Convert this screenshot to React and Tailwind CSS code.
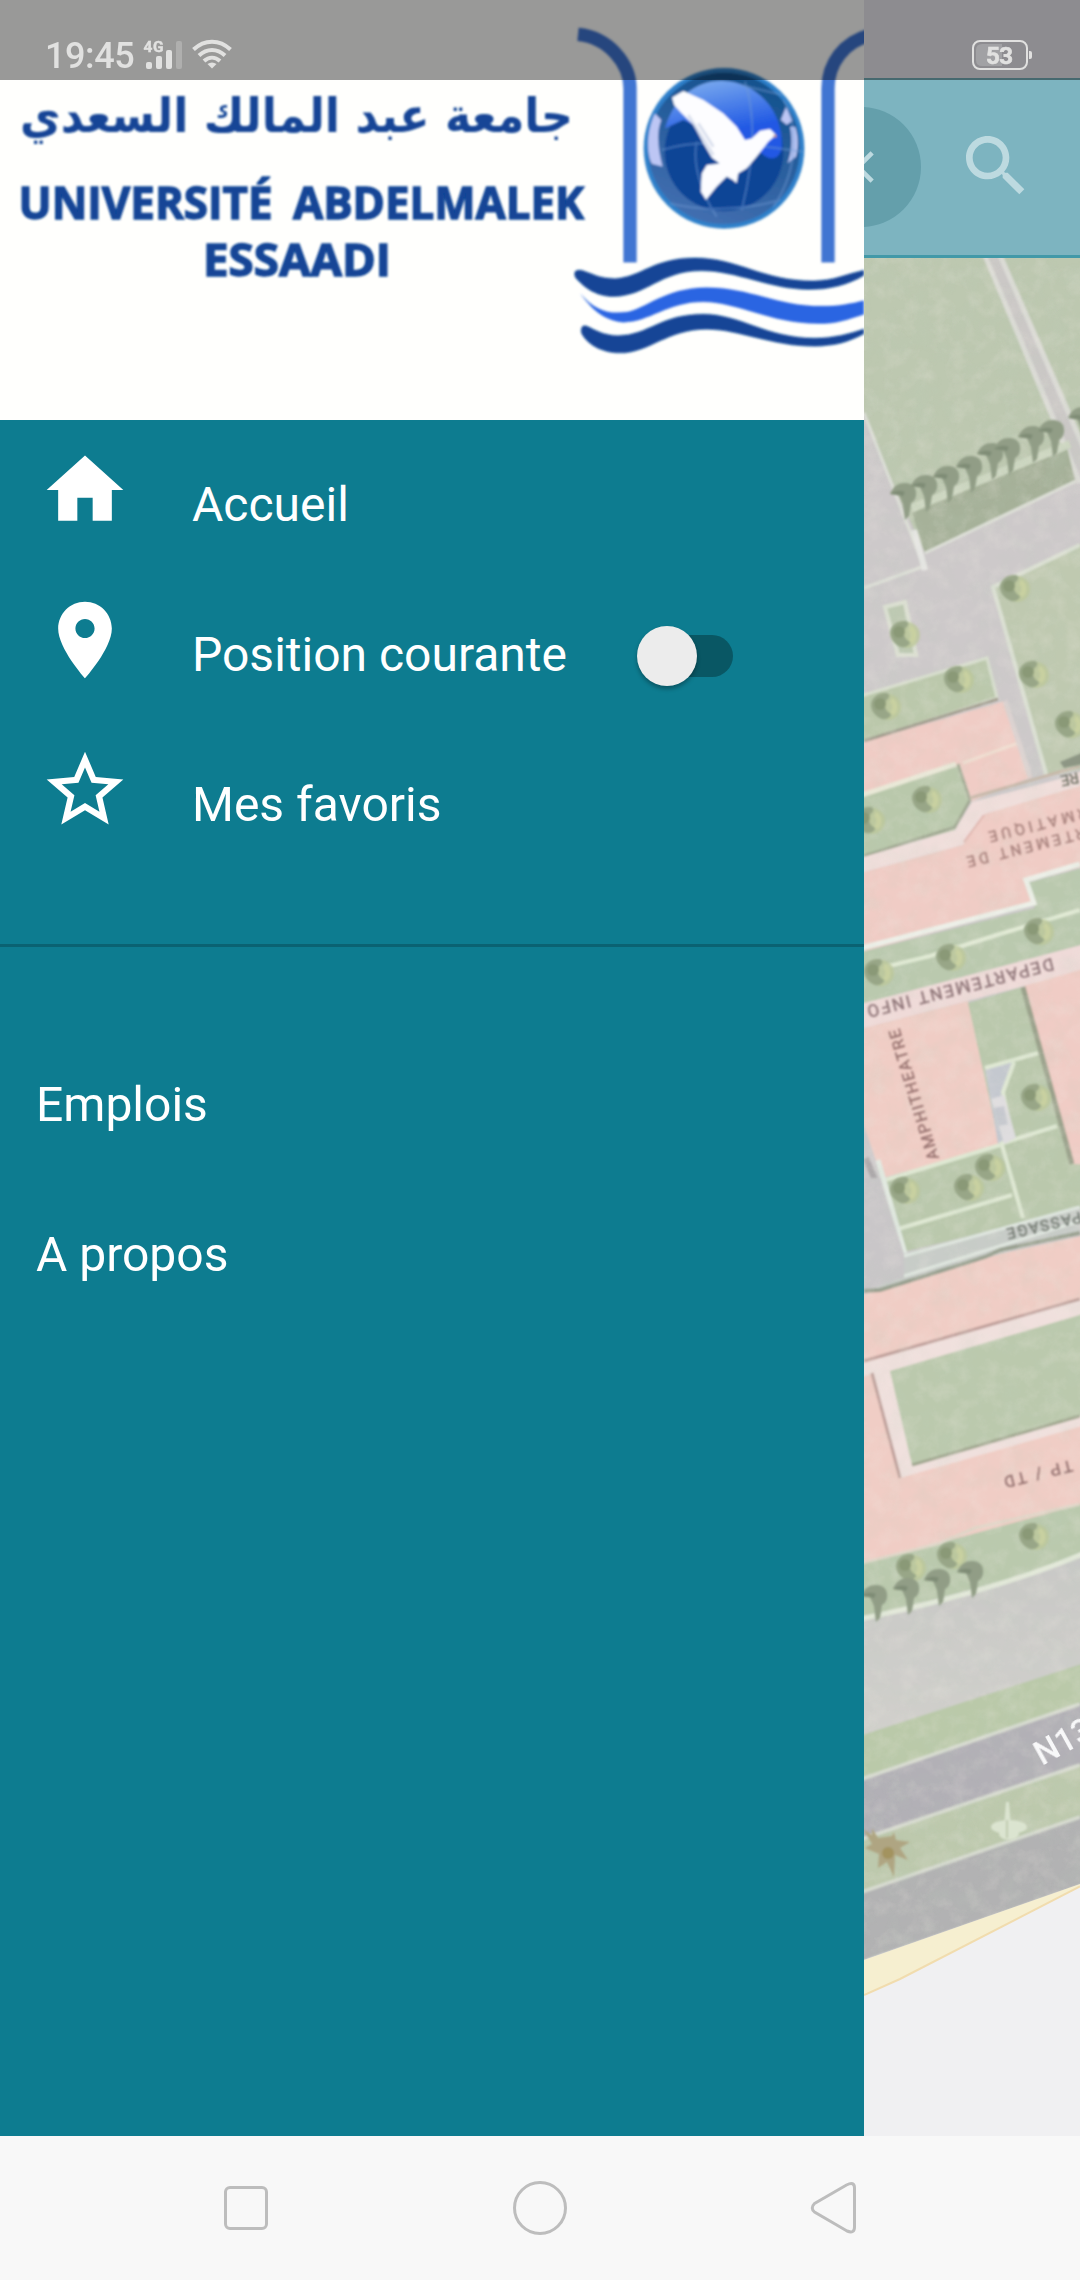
const TREES = [
  [1013, 588], [1032, 674], [1068, 724], [903, 634], [957, 679], [884, 706],
  [925, 799], [868, 820], [877, 972], [949, 957], [1037, 931], [1034, 1097],
  [903, 1190], [967, 1187], [988, 1167], [1032, 1536], [950, 1555], [909, 1567],
];

const PALMS = [
  [904, 498], [925, 490], [947, 481], [970, 471], [991, 458], [1008, 453],
  [1032, 441], [1052, 435], [1082, 422], [875, 1600], [907, 1593], [938, 1584], [971, 1576],
];

function Tree({ x, y }) {
  return (
    <g transform={`translate(${x} ${y})`}>
      <circle cx="4" cy="1" r="13" fill="#bcc79a" opacity=".8" />
      <path d="M3-13c-9-1-16 5-16 12 0 6 5 12 11 14 5 1 9-2 9-5-5-3-8-8-5-13 2-3 6-5 1-8z" fill="#98a687" />
      <circle cx="-4" cy="-2" r="6" fill="#8a9977" />
      <path d="M7-6c4 2 6 8 1 14" stroke="#c8d0a0" strokeWidth="5" fill="none" />
    </g>
  );
}

function Palm({ x, y }) {
  return (
    <g transform={`translate(${x} ${y})`} fill="#919d86">
      <path d="M-14-4c3-8 9-11 15-11 8 0 12 5 11 13-1 4-3 6-5 7L5 18 1 22-1 6-5-3z" />
      <path d="M-14-4c5-4 10-4 15-2l-2 4z" fill="#7f8c76" />
    </g>
  );
}

function CampusMap() {
  return (
    <svg className="block h-[1878px] w-[216px]" viewBox="864 258 216 1878">
      <defs>
        <filter id="grain" x="0" y="0" width="1" height="1">
          <feTurbulence type="fractalNoise" baseFrequency="0.045" numOctaves="4" seed="4" result="n" />
          <feColorMatrix in="n" type="matrix" values="0 0 0 0 .5  0 0 0 0 .62  0 0 0 0 .5  2 0 0 0 -.85" />
        </filter>
        <filter id="flecks" x="0" y="0" width="1" height="1">
          <feTurbulence type="fractalNoise" baseFrequency="0.06" numOctaves="4" seed="11" result="n" />
          <feColorMatrix in="n" type="matrix" values="0 0 0 0 .86  0 0 0 0 .82  0 0 0 0 .76  2 0 0 0 -.85" />
        </filter>
        <filter id="soft"><feGaussianBlur stdDeviation="1.3" /></filter>
        <clipPath id="ground"><path d="M864 258H1080V1885L864 1960z" /></clipPath>
        <linearGradient id="plaza" x1="0" y1="0" x2="0" y2="1">
          <stop offset="0" stopColor="#c8c8c6" />
          <stop offset="1" stopColor="#d1d0cc" />
        </linearGradient>
      </defs>
      <rect x="864" y="258" width="216" height="1878" fill="#f0f0f2" />
      <g filter="url(#soft)">
        <path d="M850 240H1100V1876L1080 1885 864 1960H850z" fill="#cdc9ca" />
        {/* lawns beside the upper path */}
        <path d="M850 240H977L985 258 1063 447 1075 480 925 553 895 488 864 413 850 380zM1000 240 1000 258 1080 437 1100 470V240z" fill="#bdc8b0" />
        <path d="M985 255 1080 483 M1000 255 1090 462" stroke="#dcdcd6" strokeWidth="5" />
        <path d="M992 255 1085 472" stroke="#cbc8c6" strokeWidth="9" />
        <path d="M912 513 1067 447 1075 480 925 553z" fill="#a6b199" />
        <path d="M912 508 1070 444" stroke="#cdd7c1" strokeWidth="8" />
        <path d="M864 413 925 570M925 553 1076 481M864 588 922 567" fill="none" stroke="#dddfd7" strokeWidth="3" />
        <path d="M914 530 925 570" stroke="#e6e6e3" strokeWidth="6" />
        <path d="M993 587 1100 535V765L1047 777z" fill="#bfc9b0" />
        <path d="M1080 545 993 587 1047 777" fill="none" stroke="#dbe0d3" strokeWidth="4" />
        <path d="M885 607 905 602 916 655 898 655z" fill="#bec9b2" stroke="#dce0d2" strokeWidth="4" />
        <path d="M850 700 864 695 987 658 997 698 864 742 850 746z" fill="#bbc8ab" stroke="#d9dfcf" strokeWidth="3" />
        {/* north building */}
        <path d="M850 746 1005 701 1032 777 970 802 958 766 850 800z" fill="#f0ccc5" />
        <path d="M864 741 998 699" stroke="#a39d8f" strokeWidth="3" />
        <path d="M963 763 1018 743" stroke="#f0ded1" strokeWidth="3" />
        <path d="M1005 701 1030 777" stroke="#dcd2d0" strokeWidth="5" />
        <path d="M850 800 958 766 969 802 955 830 850 860z" fill="#b9c8ab" />
        <path d="M850 799 956 764" stroke="#e9e8d7" strokeWidth="5" />
        <path d="M958 764 970 800 955 827 864 856" fill="none" stroke="#a3aa94" strokeWidth="3" />
        <path d="M850 861 955 830 972 802 1060 779 1100 765V782L985 814 963 845 850 876z" fill="#f0dedb" />
        <path d="M970 798 1080 766" stroke="#c7b7a9" strokeWidth="3" />
        {/* department building */}
        <path d="M850 876 963 845 985 814 1100 780V862L1025 882 1033 905 850 955z" fill="#f0ccc5" />
        <path d="M964 842 984 815" stroke="#dfb5ae" strokeWidth="2" />
        <path d="M850 955 1035 908 1027 883 1100 863V940L850 1007z" fill="#bac9ae" />
        <path d="M850 951 1034 903 1026 880 1080 864" fill="none" stroke="#edf0e8" strokeWidth="5" />
        <path d="M885 967 930 956 1000 934 1080 910" fill="none" stroke="#e1ead4" strokeWidth="4" />
        <path d="M850 1007 1100 940V966L850 1032z" fill="#efdad8" />
        {/* amphitheatre and courtyards */}
        <path d="M850 1032 968 1001 1000 1146 882 1178 850 1085z" fill="#f0cdc5" />
        <path d="M1024 986 1100 964V1170L1073 1164z" fill="#f0ccc5" />
        <path d="M968 1003 1022 987 1072 1164 1100 1165V1205L903 1252 885 1180 1000 1146z" fill="#bac8ac" />
        <path d="M1023 987 1072 1164" stroke="#9ba28c" strokeWidth="5" />
        <path d="M985 1068 1013 1060 1003 1092 1015 1137 998 1144z" fill="#c4c8cf" />
        <path d="M985 1068 1038 1053M1014 1062 1003 1092 1012 1140M1000 1144 1057 1126M1002 1145 1023 1218M885 1180 1000 1145M898 1229 1012 1195" fill="none" stroke="#dfe8d3" strokeWidth="4" />
        <path d="M991 1099 1004 1095 1016 1138 1004 1144z" fill="#dfdddf" />
        <path d="M994 1108 1004 1106 1008 1124 999 1126z" fill="#c6c8cf" />
        <path d="M878 1160 905 1254" stroke="#e2e9e1" strokeWidth="5" />
        <path d="M866 1158 875 1180" stroke="#aaa4a8" strokeWidth="6" />
        <path d="M903 1254 1080 1206V1232L864 1292" fill="#c8ccc8" />
        <path d="M904 1256 1080 1207M904 1276 1080 1221" stroke="#dfe6df" strokeWidth="3" />
        <path d="M850 1190 864 1178 880 1178 904 1254V1277L850 1296z" fill="#c9c6c8" />
        {/* south building around its garden */}
        <path d="M850 1298 880 1290 987 1258 1000 1254 1100 1232V1500L850 1567z" fill="#f0cdc5" />
        <path d="M864 1291 880 1290 985 1257 1000 1250 1080 1233" fill="none" stroke="#99a090" strokeWidth="4" />
        <path d="M850 1367 1100 1294V1421L900 1478 872 1374 850 1380z" fill="#f0e0dd" />
        <path d="M864 1361 1080 1299M872 1373 900 1478" stroke="#c0a09b" strokeWidth="3" />
        <path d="M890 1371 1100 1309V1410L912 1465z" fill="#bbc9ad" />
        <path d="M912 1465 1080 1416" stroke="#a2a891" strokeWidth="3" />
        <path d="M850 1567 940 1543 1100 1499V1555L850 1622z" fill="#bac9ad" />
        <path d="M850 1566 940 1543 975 1528 1080 1504" fill="none" stroke="#e0d6c8" strokeWidth="3" />
        <path d="M850 1622Q990 1594 1100 1548V1660L850 1740z" fill="url(#plaza)" />
        <path d="M850 1621Q990 1593 1085 1553" fill="none" stroke="#e2e8d9" strokeWidth="5" />
        <path d="M850 1739 1100 1658V1697L850 1783z" fill="#bac9a9" />
        <path d="M850 1783 1100 1697V1758L850 1844z" fill="#b2b0b6" />
        <path d="M850 1844 1100 1758V1810L850 1896z" fill="#bdc9ad" />
        <path d="M850 1896 1100 1810V1878L850 1965z" fill="#b2b2b3" />
        <path d="M850 1783 1080 1704M850 1843 1080 1765M850 1896 1080 1817" stroke="#d7dbd0" strokeWidth="3.5" />
      </g>
      <g clipPath="url(#ground)">
        <rect x="864" y="258" width="216" height="1702" filter="url(#grain)" opacity=".16" />
        <rect x="864" y="258" width="216" height="1702" filter="url(#flecks)" opacity=".22" />
      </g>
      <g filter="url(#soft)">
        {TREES.map(([x, y]) => <Tree key={`${x}-${y}`} x={x} y={y} />)}
        {PALMS.map(([x, y]) => <Palm key={`${x}-${y}`} x={x} y={y} />)}
        <path d="M1060 762 1084 752V764L1064 768z" fill="#8d9684" />
        <path d="M872 1828l6 10 14-2 2-4 2 8 14 2-10 6 8 12-13-5-1 22-7-15-9 6 1-14-14-6 7-4-9-15 9 6z" fill="#afa582" />
        <circle cx="888" cy="1853" r="6" fill="#a3935f" />
        <g fill="#dbe4d0">
          <path d="M1006 1802h3l2 24h-7z" />
          <ellipse cx="1009" cy="1827" rx="18" ry="7" />
          <ellipse cx="1009" cy="1834" rx="10" ry="6" />
        </g>
        <path d="M1007 1820v18" stroke="#b7c2a6" strokeWidth="1.5" />
        <g fill="#a9847f" stroke="#a9847f" strokeWidth=".4" fontFamily="Roboto, sans-serif" fontSize="15">
          <text transform="translate(988 832) rotate(166)" textAnchor="end" textLength="150">INFORMATIQUE</text>
          <text transform="translate(966 857) rotate(166)" textAnchor="end" textLength="172">DEPARTEMENT DE</text>
          <text transform="translate(1060 776) rotate(168)" textAnchor="end" fill="#76776b" stroke="#76776b">RE</text>
          <text transform="translate(1052 958) rotate(165.5)" fontSize="17" fill="#8f7679" stroke="#8f7679" textLength="192">DEPARTEMENT INFO</text>
          <text transform="translate(939 1158) rotate(-107)" fontSize="16" fill="#977370" stroke="#977370" textLength="136">AMPHITHEATRE</text>
          <text transform="translate(1006 1229) rotate(167)" textAnchor="end" fill="#747b73" stroke="#747b73" textLength="76">PASSAGE</text>
          <text transform="translate(1003 1477) rotate(166)" textAnchor="end" fontSize="16" fill="#93716f" stroke="#93716f" textLength="70">TP / TD</text>
        </g>
      </g>
      <path d="M864 1960 1080 1884V1887L900 1979 864 1995z" fill="#f6efd0" />
      <path d="M864 1995 900 1979 1080 1886.500" fill="none" stroke="#f1dcae" strokeWidth="2" />
      <text transform="translate(1042 1766) rotate(-29)" fill="#f8f8f9" fontFamily="Roboto, sans-serif" fontSize="33" fontWeight="500">N13</text>
    </svg>
  );
}

function UniversityBanner() {
  return (
    <svg className="block h-[420px] w-[864px] shrink-0 bg-[#fffffd]" viewBox="0 0 864 420">
      <defs>
        <filter id="smooth"><feGaussianBlur stdDeviation="1.2" /></filter>
        <linearGradient id="sky" x1="0" y1="0" x2="0.3" y2="1">
          <stop offset="0" stopColor="#85b4f0" />
          <stop offset="0.75" stopColor="#2159e4" />
        </linearGradient>
        <linearGradient id="rim" x1="0.7" y1="0" x2="0.3" y2="1">
          <stop offset="0" stopColor="#12508c" />
          <stop offset="1" stopColor="#4470b2" />
        </linearGradient>
        <clipPath id="globe"><circle cx="462" cy="415" r="236" /></clipPath>
      </defs>
      <g filter="url(#smooth)">
        <g fill="#124596">
          <text transform="translate(20 132) scale(1 1.08)" direction="ltr" textLength="553" lengthAdjust="spacingAndGlyphs" fontFamily="'DejaVu Sans', sans-serif" fontSize="44" fontWeight="700">جامعة عبد المالك السعدي</text>
          <g fontFamily="'Open Sans', sans-serif" fontSize="45" fontWeight="700" stroke="#124596" strokeWidth="1.4">
            <text x="18.500" y="218.500" textLength="254" lengthAdjust="spacingAndGlyphs">UNIVERSITÉ</text>
            <text x="293" y="218.500" textLength="291" lengthAdjust="spacingAndGlyphs">ABDELMALEK</text>
            <text x="203" y="275.500" textLength="188" lengthAdjust="spacingAndGlyphs">ESSAADI</text>
          </g>
        </g>
        <g transform="translate(570 10) scale(.33333)">
          <path d="M24 73C115 82 180 160 180 235V757M774 757V235C774 160 822 95 900 75" fill="none" stroke="#4175d2" strokeWidth="40" />
          <circle cx="462" cy="415" r="234" fill="url(#rim)" stroke="#2f80ca" strokeWidth="14" />
          <g clipPath="url(#globe)">
            <circle cx="462" cy="425" r="178" fill="#0d4496" />
            <path d="M285 355C310 265 375 212 455 212 560 215 640 300 636 410 630 450 600 455 575 430L450 380 340 330z" fill="url(#sky)" />
            <path d="M255 310C225 370 232 440 246 462L278 470C265 420 258 370 274 330z" fill="#bdc6f4" />
            <path d="M648 290 632 330 650 345 668 332zM660 350C668 390 665 430 652 460L678 440C690 400 680 360 675 350z" fill="#bdc6f4" />
            <path d="M275 420C400 380 540 405 700 425M380 395C365 470 400 560 440 620M525 215C565 340 545 480 515 600M300 580C400 605 530 600 630 570M640 270C690 350 680 490 610 590M510 225 660 260" fill="none" stroke="#709ad4" strokeWidth="6" opacity=".5" />
            <path d="M312 285 306 262 340 243 400 270 460 310 500 350 525 390 545 385 570 362 600 357 618 375 595 395 560 440 530 475 505 490 500 520 488 510 470 500 440 530 408 570 392 545 395 490 410 465 448 460 425 443 400 400 370 345 335 310z" fill="#fdfdff" />
            <path d="M355 315 430 435M385 340 430 410" stroke="#d5dcec" strokeWidth="7" />
            <circle cx="615" cy="378" r="5" fill="#c29595" />
          </g>
          <path d="M30 780C60 785 80 805 135 805 215 800 250 743 375 743 500 743 580 812 730 812 790 812 835 790 882 780V796C835 825 780 839 715 839 600 839 500 783 395 783 270 783 230 860 130 860 75 860 40 830 16 803 8 785 18 777 30 780z" fill="#124596" />
          <path d="M30 850C75 900 110 912 170 906 230 895 280 834 410 832 540 832 620 888 755 888 805 888 845 880 882 871V913C830 930 800 941 745 941 600 941 500 876 400 876 290 876 240 937 160 937 95 930 65 895 30 850z" fill="#2b65e2" />
          <path d="M48 947C75 957 95 976 145 976 235 976 270 912 400 912 510 912 590 984 735 984 790 984 840 970 882 956V972C835 998 790 1009 735 1009 600 1009 510 958 410 958 290 958 240 1029 150 1029 90 1029 50 1000 34 970 30 953 38 944 48 947z" fill="#124596" />
        </g>
      </g>
    </svg>
  );
}

function StatusBar() {
  return (
    <div className="absolute inset-x-0 top-0 flex h-20 bg-black/40 font-[Roboto,sans-serif] text-[#e1e1e0]">
      <span className="ml-[45px] mt-[35px] w-[98px] text-[36px] font-medium leading-[42px] tracking-[-0.4px]">19:45</span>
      <svg className="mt-[38px] h-[34px] w-[92px]" viewBox="143 38 92 34" fill="currentColor">
        <text x="143.500" y="52" fontSize="15.500" fontWeight="700" textLength="20" stroke="currentColor" strokeWidth=".4">4G</text>
        <rect x="146" y="62" width="6" height="7" rx="2" />
        <rect x="156" y="56" width="6" height="13" rx="2" />
        <rect x="166" y="50" width="6" height="19" rx="2" />
        <rect x="176" y="41" width="6" height="28" rx="2" opacity=".3" />
        <g fill="none" stroke="currentColor" strokeWidth="4">
          <path d="M193.500 49.500C204.500 39 219.500 39 230.500 49.500" />
          <path d="M199 55.500C207 48 217 48 225 55.500" />
          <path d="M204 61C209 56.500 215 56.500 220 61" />
        </g>
        <path d="M207.500 64q4.500-3 9 0l-4.500 4.500z" />
      </svg>
      <svg className="ml-auto mr-[48px] mt-[39px] h-[32px] w-[60px]" viewBox="0 0 60 32" fill="currentColor">
        <rect x="1" y="2" width="54" height="28" rx="7" fill="none" stroke="currentColor" strokeWidth="2" />
        <path d="M10 5H30V27H10Q4 27 4 21V11Q4 5 10 5z" opacity=".25" />
        <path d="M57 12h1q2 0 2 2v4q0 2-2 2h-1z" />
        <text x="14" y="24.500" fontSize="24" fontWeight="700" textLength="27" stroke="currentColor" strokeWidth=".6">53</text>
      </svg>
    </div>
  );
}

function MenuItem({ icon, label, children }) {
  return (
    <div className="flex h-[150px] items-center pl-[39px]">
      <svg className="mt-[15px] size-[92px] self-start" viewBox="0 0 24 24" fill="white"><path d={icon} /></svg>
      <span className="ml-[61px] mt-[2px]">{label}</span>
      {children}
    </div>
  );
}

function Toggle() {
  return (
    <div className="ml-[70px] mt-[3px] flex h-[60px] w-[96px] items-center">
      <div className="z-10 h-[60px] w-[60px] shrink-0 rounded-full bg-[#ececec] shadow-[0_3px_4px_rgba(0,0,0,0.3)]" />
      <div className="-ml-[48px] h-[42px] w-[84px] shrink-0 rounded-full bg-[#095764]" />
    </div>
  );
}

function Drawer() {
  return (
    <aside className="flex w-[864px] shrink-0 flex-col bg-[#0d7c90] font-[Roboto,sans-serif] text-[48px] leading-[56px] text-white">
      <UniversityBanner />
      <nav className="flex flex-col pt-[9px]">
        <MenuItem icon="M10 20v-6h4v6h5v-8h3L12 3 2 12h3v8z" label="Accueil" />
        <MenuItem icon="M12 2C8.130 2 5 5.130 5 9c0 5.250 7 13 7 13s7-7.750 7-13c0-3.870-3.130-7-7-7zm0 9.500c-1.380 0-2.500-1.120-2.500-2.500s1.120-2.500 2.500-2.500 2.500 1.120 2.500 2.500-1.120 2.500-2.500 2.500z" label="Position courante">
          <Toggle />
        </MenuItem>
        <MenuItem icon="M22 9.240l-7.190-.620L12 2 9.190 8.630 2 9.240l5.460 4.730L5.820 21 12 17.270 18.180 21l-1.630-7.030L22 9.240zM12 15.400l-3.760 2.270 1-4.280-3.320-2.880 4.380-.380L12 6.100l1.710 4.040 4.380.380-3.320 2.880 1 4.280L12 15.400z" label="Mes favoris" />
      </nav>
      <div className="mt-[65px] h-[3px] bg-[#0a6272]" />
      <nav className="flex flex-col pl-9 pt-[83px]">
        <span className="flex h-[150px] items-center">Emplois</span>
        <span className="flex h-[150px] items-center">A propos</span>
      </nav>
    </aside>
  );
}

function MapPane() {
  return (
    <section className="flex w-[216px] flex-col">
      <div className="h-[78px] bg-[#ebe9f0]" />
      <header className="flex h-[180px] items-start justify-between overflow-hidden border-b-[3px] border-t-2 border-b-[#4299a8] border-t-[#75afb9] bg-[#7db4c0]">
        <div className="-ml-[63px] mt-[27px] flex size-[120px] shrink-0 items-center justify-center rounded-full bg-[#649fab]">
          <svg className="-ml-1.5 size-[54px] shrink-0" viewBox="0 0 24 24" fill="#bddae0">
            <path d="M19 6.410L17.590 5 12 10.590 6.410 5 5 6.410 10.590 12 5 17.590 6.410 19 12 13.410 17.590 19 19 17.590 13.410 12z" />
          </svg>
        </div>
        <svg className="mr-[44px] mt-[46px] size-20 shrink-0" viewBox="0 0 24 24" fill="#bddae0">
          <path d="M15.500 14h-.790l-.280-.270C15.410 12.590 16 11.110 16 9.500 16 5.910 13.090 3 9.500 3S3 5.910 3 9.500 5.910 16 9.500 16c1.610 0 3.090-.590 4.230-1.570l.270.280v.790l5 4.990L20.490 19l-4.990-5zm-6 0C7.010 14 5 11.990 5 9.500S7.010 5 9.500 5 14 7.010 14 9.500 11.990 14 9.500 14z" />
        </svg>
      </header>
      <CampusMap />
    </section>
  );
}

function NavigationBar() {
  return (
    <footer className="flex h-36 items-center bg-[#f8f8f8] pl-[224px]">
      <div className="size-[44px] rounded-[6px] border-[3px] border-[#bdbdbd]" />
      <div className="ml-[245px] size-[54px] rounded-full border-[3px] border-[#bdbdbd]" />
      <svg className="ml-[243px] h-[54px] w-[48px]" viewBox="0 0 48 54" fill="none" stroke="#bdbdbd" strokeWidth="3">
        <path d="M4.500 22.500 36.500 4Q44.500 0 44.500 7V46Q44.500 53 37 50L4.500 31Q0 27 4.500 22.500z" />
      </svg>
    </footer>
  );
}

export default function App() {
  return (
    <div className="relative flex h-[2280px] w-[1080px] flex-col overflow-hidden">
      <main className="flex h-[2136px]">
        <Drawer />
        <MapPane />
      </main>
      <NavigationBar />
      <StatusBar />
    </div>
  );
}
